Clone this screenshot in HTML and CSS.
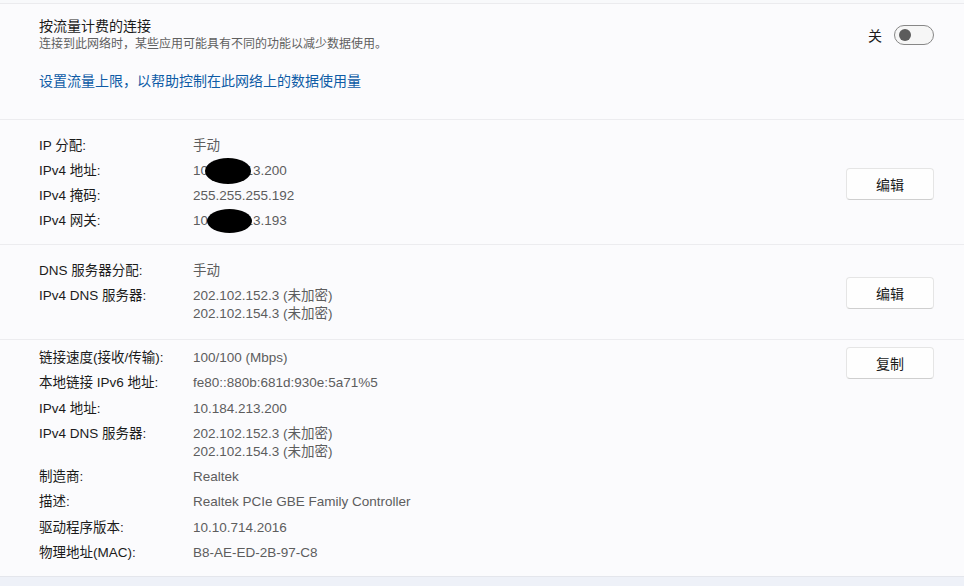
FILE: index.html
```html
<!DOCTYPE html>
<html lang="zh-CN">
<head>
    <meta charset="UTF-8">
    <meta name="viewport" content="width=device-width, initial-scale=1.0">
    <title>以太网属性</title>
    <link rel="stylesheet" href="styles.css">
</head>
<body>
    <div class="prev"></div>
    <div class="card">
        <!-- 按流量计费 -->
        <section class="block metered">
            <div class="metered-head">
                <div class="metered-text">
                    <div class="title">按流量计费的连接</div>
                    <div class="hint">连接到此网络时，某些应用可能具有不同的功能以减少数据使用。</div>
                </div>
                <div class="toggle-wrap">
                    <span class="toggle-state">关</span>
                    <span class="toggle"><span class="knob"></span></span>
                </div>
            </div>
            <a class="link" href="#">设置流量上限，以帮助控制在此网络上的数据使用量</a>
        </section>

        <!-- IP 设置 -->
        <section class="block mid">
            <div class="rows">
                <div class="row"><span class="key">IP 分配:</span><span class="val">手动</span></div>
                <div class="row"><span class="key">IPv4 地址:</span><span class="val masked">10.184.213.200<i class="blot blot-a"></i></span></div>
                <div class="row"><span class="key">IPv4 掩码:</span><span class="val">255.255.255.192</span></div>
                <div class="row"><span class="key">IPv4 网关:</span><span class="val masked">10.184.213.193<i class="blot blot-b"></i></span></div>
            </div>
            <button class="btn">编辑</button>
        </section>

        <!-- DNS 设置 -->
        <section class="block mid dns">
            <div class="rows">
                <div class="row"><span class="key">DNS 服务器分配:</span><span class="val">手动</span></div>
                <div class="row"><span class="key">IPv4 DNS 服务器:</span><span class="val">202.102.152.3 (未加密)<br>202.102.154.3 (未加密)</span></div>
            </div>
            <button class="btn">编辑</button>
        </section>

        <!-- 属性 -->
        <section class="block info">
            <div class="rows rows-tight">
                <div class="row"><span class="key">链接速度(接收/传输):</span><span class="val">100/100 (Mbps)</span></div>
                <div class="row"><span class="key">本地链接 IPv6 地址:</span><span class="val">fe80::880b:681d:930e:5a71%5</span></div>
                <div class="row"><span class="key">IPv4 地址:</span><span class="val">10.184.213.200</span></div>
                <div class="row"><span class="key">IPv4 DNS 服务器:</span><span class="val">202.102.152.3 (未加密)<br>202.102.154.3 (未加密)</span></div>
                <div class="row"><span class="key">制造商:</span><span class="val">Realtek</span></div>
                <div class="row"><span class="key">描述:</span><span class="val">Realtek PCIe GBE Family Controller</span></div>
                <div class="row"><span class="key">驱动程序版本:</span><span class="val">10.10.714.2016</span></div>
                <div class="row"><span class="key">物理地址(MAC):</span><span class="val">B8-AE-ED-2B-97-C8</span></div>
            </div>
            <button class="btn btn-top">复制</button>
        </section>
    </div>
</body>
</html>
```

FILE: styles.css
```css
body {
    margin: 0;
    background-color: #eef1f8;
    font-family: 'Segoe UI', 'Liberation Sans', 'Noto Sans CJK SC', sans-serif;
    color: #1b1b1b;
}

.prev {
    height: 3px;
    background-color: #f8f9fb;
}

.card {
    background-color: #fbfbfd;
    border-top: 1px solid #ebebee;
}

.block {
    padding: 0 30px 0 39px;
    border-bottom: 1px solid #ececef;
}

.block:last-child {
    border-bottom: 1px solid #e4e6ec;
}

/* 按流量计费 */
.metered {
    padding-top: 12px;
    padding-bottom: 28px;
}

.metered-head {
    display: flex;
    align-items: center;
    justify-content: space-between;
}

.title {
    font-size: 14px;
    line-height: 20px;
}

.hint {
    font-size: 12px;
    line-height: 16px;
    color: #5f5f5f;
}

.toggle-wrap {
    display: flex;
    align-items: center;
    gap: 12px;
    margin-top: 1px;
}

.toggle-state {
    font-size: 14px;
}

.toggle {
    display: flex;
    align-items: center;
    box-sizing: border-box;
    width: 40px;
    height: 20px;
    padding-left: 4px;
    border: 1px solid #878787;
    border-radius: 10px;
    background-color: #f6f6f6;
}

.knob {
    width: 12px;
    height: 12px;
    border-radius: 50%;
    background-color: #5c5c5c;
}

.link {
    display: block;
    margin-top: 19px;
    font-size: 14px;
    line-height: 20px;
    color: #0e5ba6;
    text-decoration: none;
}

/* 属性列表 */
.mid {
    display: flex;
    align-items: center;
    justify-content: space-between;
    padding-top: 17px;
    padding-bottom: 14px;
}

.dns {
    padding-bottom: 16px;
}

.info {
    display: flex;
    align-items: flex-start;
    justify-content: space-between;
    padding-top: 8px;
    padding-bottom: 14px;
}

.rows {
    display: flex;
    flex-direction: column;
    gap: 7px;
}

.rows-tight {
    gap: 7.3px;
    margin-top: 1px;
}

.row {
    display: flex;
    font-size: 13.5px;
    line-height: 18px;
}

.key {
    width: 154px;
    flex-shrink: 0;
}

.val {
    color: #5d5d5d;
}

.masked {
    position: relative;
}

.blot {
    position: absolute;
    background-color: #000;
    border-radius: 50%;
}

.blot-a {
    left: 12px;
    top: -4px;
    width: 46px;
    height: 26px;
}

.blot-b {
    left: 14px;
    top: -3px;
    width: 45px;
    height: 24px;
}

.btn {
    width: 88px;
    height: 32px;
    padding: 0;
    background-color: #fefefe;
    border: 1px solid #e5e5e5;
    border-bottom-color: #cfcfcf;
    border-radius: 4px;
    font-family: 'Segoe UI', 'Liberation Sans', 'Noto Sans CJK SC', sans-serif;
    font-size: 14px;
    color: #1b1b1b;
    cursor: pointer;
}

.btn-top {
    margin-top: -1px;
}

.btn:hover {
    background-color: #f6f6f6;
}
```
